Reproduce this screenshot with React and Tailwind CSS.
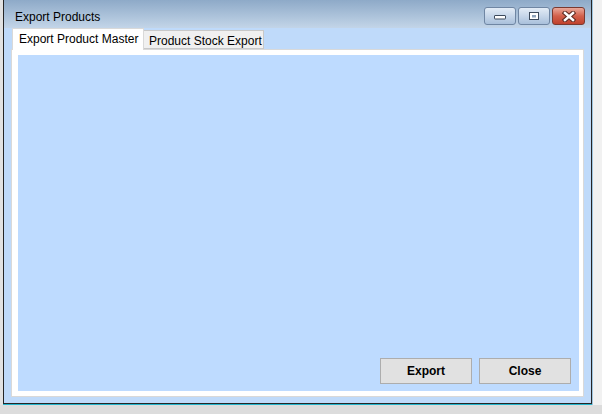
import React from "react";

function CaptionButton({ kind }) {
  if (kind === "close") {
    return (
      <div className="w-[33px] h-[18px] rounded-[3px] border border-[#7a3a30] bg-gradient-to-b from-[#e9a89a] via-[#d2604b] to-[#c0412b] flex items-center justify-center">
        <svg width="16" height="11" viewBox="0 0 16 11">
          <path d="M4 2 L12 9 M12 2 L4 9" stroke="#5a2a22" strokeWidth="4.5" strokeLinecap="square" />
          <path d="M4 2 L12 9 M12 2 L4 9" stroke="#ffffff" strokeWidth="2.5" strokeLinecap="square" />
        </svg>
      </div>
    );
  }
  return (
    <div className="w-[32px] h-[18px] rounded-[3px] border border-[#6f86a3] bg-gradient-to-b from-[#e3ecf6] via-[#c6d6e9] to-[#a9c0db] flex items-center justify-center">
      {kind === "min" ? (
        <svg width="14" height="8" viewBox="0 0 14 8">
          <rect x="1.5" y="3.5" width="11" height="3.5" rx="0.5" fill="#ffffff" stroke="#3c4a5c" />
        </svg>
      ) : (
        <svg width="12" height="10" viewBox="0 0 12 10">
          <rect x="1.5" y="1.5" width="9" height="7" fill="#ffffff" stroke="#3c4a5c" />
          <rect x="4" y="4" width="4" height="2.5" fill="#8ea3bb" />
        </svg>
      )}
    </div>
  );
}

function WinButton({ label }) {
  return (
    <button className="w-[92px] h-[26px] bg-[#e1e1e1] border border-[#adadad] text-[12px] font-bold text-black">
      {label}
    </button>
  );
}

export default function App() {
  return (
    <div
      className="w-[602px] h-[414px] bg-[#dcdcdc] overflow-hidden"
      style={{ fontFamily: '"Liberation Sans", Arial, sans-serif' }}
    >
      <div className="flex">
        <div className="w-[3px] h-[405px] bg-[#e2e2e2]" />
        <div className="w-[589px] border-b border-[#23b4cc]">
          <div className="h-[404px] border-x border-b border-[#262626] bg-[#bfdafa] flex flex-col">
            {/* title bar */}
            <div className="h-[28px] bg-gradient-to-b from-[#8eaac8] to-[#c3d5e8] flex items-start">
              <span className="pl-[11px] pt-[10px] text-[12px] leading-[14px] text-black">
                Export Products
              </span>
              <div className="ml-auto mr-[6px] mt-[7px] flex gap-[2px]">
                <CaptionButton kind="min" />
                <CaptionButton kind="max" />
                <CaptionButton kind="close" />
              </div>
            </div>

            <div className="flex-1 flex flex-col px-[7px] pb-[6px]">
              {/* tab strip */}
              <div className="h-[21px] flex items-end ml-[1px] relative z-10">
                <div className="h-[22px] -mb-[1px] w-[132px] bg-white border-t border-x border-[#d9d9d9] pl-[6px] pt-[3px] text-[12px] leading-[14px] text-black">
                  Export Product Master
                </div>
                <div className="h-[19px] w-[120px] bg-[#f0f0f0] border border-[#c8c8c8] border-l-0 pl-[5px] pt-[3px] text-[12px] leading-[14px] text-black">
                  Product Stock Export
                </div>
              </div>

              {/* tab page */}
              <div className="flex-1 border border-[#d9d9d9] bg-white pl-[6px] pt-[5px] pr-[4px] pb-[5px] flex">
                <div className="flex-1 bg-[#bedbff] flex flex-col justify-end items-end pr-[8px] pb-[7px]">
                  <div className="flex gap-[7px]">
                    <WinButton label="Export" />
                    <WinButton label="Close" />
                  </div>
                </div>
              </div>
            </div>
          </div>
        </div>
        <div className="flex-1 h-[405px] bg-[#f1f1f1] border-l border-[#9fc6e0]" />
      </div>
    </div>
  );
}
